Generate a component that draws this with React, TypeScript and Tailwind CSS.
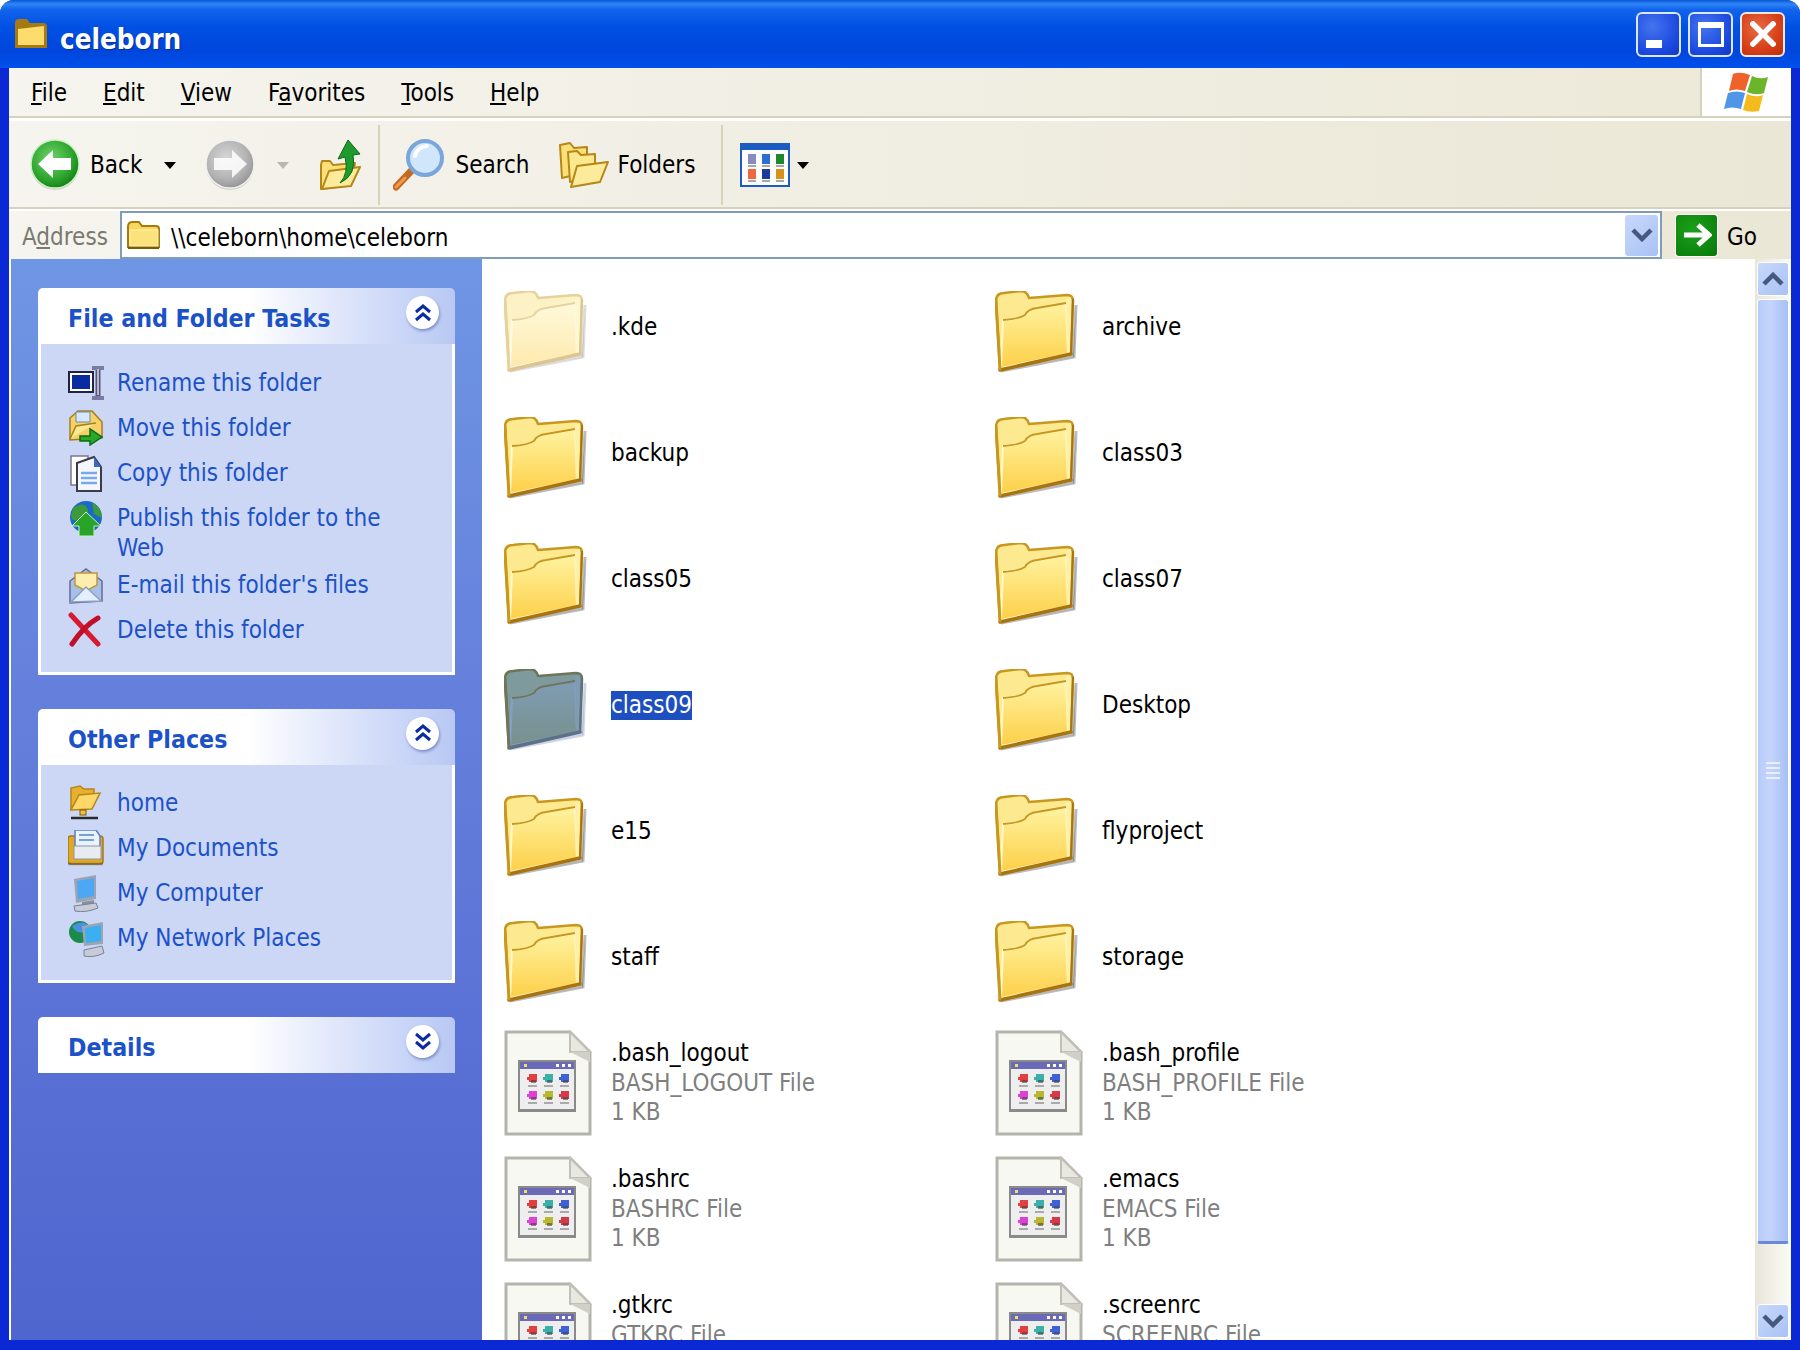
import React from 'react';

const menus: [string, string, string][] = [
  ['', 'F', 'ile'],
  ['', 'E', 'dit'],
  ['', 'V', 'iew'],
  ['F', 'a', 'vorites'],
  ['', 'T', 'ools'],
  ['', 'H', 'elp'],
];

const F_COLORS = {
  normal: { edge: '#c8971e', back: '#fde98f', top: '#fff3a0', bottom: '#fdcf48', dark: '#a87410', rim: '#fff8c8', strip: '#fff0a8', shadow: '#00000044' },
  faded: { edge: '#e6d29c', back: '#fdf2c6', top: '#fff9db', bottom: '#fde9ac', dark: '#dcc58e', rim: '#fffbe6', strip: '#fff7d4', shadow: '#00000022' },
  selected: { edge: '#6f7558', back: '#7f9a9c', top: '#7f9cb4', bottom: '#79908c', dark: '#5c7086', rim: '#86a0c8', strip: '#7f9cb4', shadow: '#4a64a044' },
};

const Folder = ({ kind = 'normal' }: { kind?: 'normal' | 'faded' | 'selected' }) => {
  const c = F_COLORS[kind];
  const id = `fold-${kind}`;
  return (
    <svg width="84" height="82" viewBox="0 0 84 82" className="mt-[14px] shrink-0">
      <defs>
        <linearGradient id={id} x1="0" y1="0" x2="0" y2="1">
          <stop offset="0" stopColor={c.top} />
          <stop offset="1" stopColor={c.bottom} />
        </linearGradient>
      </defs>
      <path d="M6 80 L79 66 L81 14 L78 66 Z" fill={c.shadow} stroke={c.shadow} strokeWidth="3" />
      <path d="M1 10 Q1 2 9 2 L26 0 Q32 0 34 7 L72 4 Q78 4 78 10 L76 62 L5 78 Z" fill={c.back} stroke={c.edge} strokeWidth="2.5" strokeLinejoin="round" />
      <path d="M8 29 Q24 28 30 24 Q33 18 42 17 L71 12 L73 63 L6 77 Z" fill={`url(#${id})`} stroke={c.rim} strokeWidth="2" />
      <path d="M71 8 L76 6 L75 62 L72 63 Z" fill={c.strip} />
      <path d="M5 79 L76 63" stroke={c.dark} strokeWidth="3.5" strokeLinecap="round" />
      <path d="M1 10 L5 78" stroke={c.edge} strokeWidth="3" strokeLinecap="round" />
      <path d="M8 29 Q24 28 30 24 Q33 18 42 17 L71 12" fill="none" stroke={c.edge} strokeWidth="1.8" />
      <path d="M78 8 L76 62" stroke={c.dark} strokeWidth="2" />
    </svg>
  );
};

const FileDoc = () => {
  const cells = ['#e24040', '#3cb0a8', '#4060d8', '#e040d8', '#b8b830', '#d83848'];
  return (
    <svg width="88" height="106" viewBox="0 0 88 106" className="mt-[4px] shrink-0">
      <path d="M2 2 L66 2 L86 22 L86 104 L2 104 Z" fill="#f8f8f2" stroke="#b4b4ac" strokeWidth="3" />
      <path d="M66 2 L66 22 L86 22 Z" fill="#e8e8e0" stroke="#c0c0b8" strokeWidth="2" />
      <path d="M66 22 L86 22 L86 32 Z" fill="#d0d0c8" />
      <rect x="14" y="30" width="58" height="52" fill="#8a8a88" />
      <rect x="16" y="32" width="54" height="47" fill="#eeeeee" />
      <rect x="16" y="32" width="54" height="7" fill="#6a6ab8" />
      <rect x="20" y="34" width="3" height="3" fill="#f0e060" />
      <rect x="52" y="34" width="3" height="3" fill="#ffffff" />
      <rect x="58" y="34" width="3" height="3" fill="#ffffff" />
      <rect x="64" y="34" width="3" height="3" fill="#ffffff" />
      {cells.map((col, i) => {
        const x = 24 + (i % 3) * 16;
        const y = 44 + Math.floor(i / 3) * 17;
        return (
          <g key={i}>
            <rect x={x + 1} y={y} width="8" height="8" fill={col} />
            <rect x={x - 1} y={y + 3} width="3" height="3" fill={col} />
            <rect x={x + 3} y={y + 6} width="5" height="3" fill="#444" opacity="0.6" />
            <rect x={x} y={y + 11} width="9" height="2" fill="#aaaaaa" />
          </g>
        );
      })}
    </svg>
  );
};

const SmallFolder = () => (
  <svg width="36" height="30" viewBox="0 0 36 30" className="shrink-0">
    <path d="M2 7 Q2 2 6 2 L13 2 L16 6 L30 6 Q33 6 33 9 L33 27 L2 27 Z" fill="#f8d860" stroke="#a67a10" strokeWidth="2" />
    <rect x="4" y="10" width="28" height="16" fill="#fbe27a" stroke="#fff3b0" strokeWidth="1" />
    <path d="M2 28 L33 28" stroke="#7c5a08" strokeWidth="2" />
  </svg>
);

const RoundArrow = ({ dir, gray }: { dir: 'left' | 'right'; gray?: boolean }) => {
  const id = gray ? 'round-gray' : 'round-green';
  return (
    <svg width="52" height="52" viewBox="0 0 52 52" className="shrink-0">
      <defs>
        <radialGradient id={id} cx="0.42" cy="0.38" r="0.7">
          <stop offset="0" stopColor={gray ? '#d6d6d6' : '#6fd36a'} />
          <stop offset="0.6" stopColor={gray ? '#b4b4b4' : '#32a832'} />
          <stop offset="1" stopColor={gray ? '#8c8c8c' : '#0c780c'} />
        </radialGradient>
      </defs>
      <circle cx="26" cy="27" r="24" fill="#00000022" />
      <circle cx="26" cy="25" r="24" fill={`url(#${id})`} stroke={gray ? '#f0f0f0' : '#c8f0c0'} strokeWidth="1.5" />
      <path
        d={dir === 'left' ? 'M9 25 L24 11 L24 19 L42 19 L42 31 L24 31 L24 39 Z' : 'M43 25 L28 11 L28 19 L10 19 L10 31 L28 31 L28 39 Z'}
        fill="#ffffff"
        opacity={gray ? 0.85 : 1}
      />
    </svg>
  );
};

const Caret = ({ color = '#000000' }: { color?: string }) => (
  <svg width="12" height="7" viewBox="0 0 12 7" className="shrink-0">
    <path d="M0 0 L12 0 L6 7 Z" fill={color} />
  </svg>
);

const UpIcon = () => (
  <svg width="42" height="52" viewBox="0 0 42 52" className="shrink-0">
    <path d="M2 26 L2 50 L32 46 L36 24 L14 26 L11 22 L3 22 Z" fill="#fbdf78" stroke="#b48716" strokeWidth="2" strokeLinejoin="round" />
    <path d="M3 50 L10 32 L41 28 L32 47 Z" fill="#fdeb9c" stroke="#b48716" strokeWidth="2" strokeLinejoin="round" />
    <path d="M21 44 Q30 34 26 18 L19 20 L29 1 L41 15 L34 16 Q38 36 21 44 Z" fill="#1f9a2c" stroke="#0c6a18" strokeWidth="1" />
  </svg>
);

const SearchIcon = () => (
  <svg width="54" height="54" viewBox="0 0 54 54" className="shrink-0">
    <path d="M3 49 L20 31" stroke="#c46a24" strokeWidth="7" strokeLinecap="round" />
    <path d="M3 49 L12 40" stroke="#f09a50" strokeWidth="3" strokeLinecap="round" />
    <circle cx="32" cy="20" r="17" fill="#cfe6fb" stroke="#7aa6dc" strokeWidth="4" />
    <path d="M22 18 Q24 9 34 8" fill="none" stroke="#ffffff" strokeWidth="4" strokeLinecap="round" />
  </svg>
);

const FoldersIcon = () => (
  <svg width="50" height="46" viewBox="0 0 50 46" className="shrink-0">
    <path d="M1 3 L11 1 L15 6 L28 5 L28 30 L3 36 Z" fill="#fbdf78" stroke="#b48716" strokeWidth="2" strokeLinejoin="round" />
    <path d="M9 10 L18 9 L22 13 L36 12 L36 34 L11 40 Z" fill="#fde88e" stroke="#b48716" strokeWidth="2" strokeLinejoin="round" />
    <path d="M12 45 L18 24 L49 20 L41 40 Z" fill="#fdeb9c" stroke="#b48716" strokeWidth="2" strokeLinejoin="round" />
  </svg>
);

const ViewsIcon = () => {
  const cells = ['#8a8abf', '#2a70d0', '#1c8a2c', '#f06840', '#1c3a98', '#d8921c'];
  return (
    <svg width="50" height="44" viewBox="0 0 50 44" className="shrink-0">
      <rect x="1" y="1" width="48" height="42" fill="#ffffff" stroke="#1a5cc0" strokeWidth="2" />
      <rect x="1" y="1" width="48" height="6" fill="#1a5cc0" />
      {cells.map((col, i) => {
        const x = 8 + (i % 3) * 14;
        const y = 11 + Math.floor(i / 3) * 15;
        return (
          <g key={i}>
            <rect x={x} y={y} width="8" height="10" fill={col} />
            <rect x={x} y={y + 11} width="8" height="2" fill="#a8a8a8" />
          </g>
        );
      })}
    </svg>
  );
};

const Flag = () => (
  <svg width="46" height="42" viewBox="0 0 46 42" className="shrink-0">
    <path d="M9 3 Q16 0 26 4 L21 20 Q12 17 5 20 Z" fill="#f0622a" />
    <path d="M28 5 Q36 9 44 6 L40 22 Q32 25 23 21 Z" fill="#6bb52a" />
    <path d="M4 22 Q12 19 21 22 L17 38 Q8 35 0 38 Z" fill="#4f96e8" />
    <path d="M23 23 Q32 27 39 24 L35 40 Q26 42 19 39 Z" fill="#f5bb1c" />
  </svg>
);

const CaptionButton = ({ kind }: { kind: 'min' | 'max' | 'close' }) => (
  <div
    className={
      kind === 'close'
        ? 'flex h-[45px] w-[45px] items-center justify-center rounded-[6px] border-2 border-[#f0e8e4] bg-[radial-gradient(circle_at_40%_35%,#e86a44,#d43c14_65%,#b8300c)]'
        : 'flex h-[45px] w-[45px] items-center justify-center rounded-[6px] border-2 border-[#dce6fa] bg-[radial-gradient(circle_at_35%_30%,#4474ee,#1c4ae0_65%,#1238c0)]'
    }
  >
    {kind === 'min' && <div className="mt-[19px] mr-[10px] h-[8px] w-[16px] bg-white" />}
    {kind === 'max' && <div className="h-[25px] w-[26px] border-[3px] border-t-[6px] border-white" />}
    {kind === 'close' && (
      <svg width="26" height="26" viewBox="0 0 26 26">
        <path d="M3 3 L23 23 M23 3 L3 23" stroke="#ffffff" strokeWidth="5.5" strokeLinecap="square" />
      </svg>
    )}
  </div>
);

const Chevron = ({ up, color = '#47597e', double }: { up?: boolean; color?: string; double?: boolean }) =>
  double ? (
    <svg width="18" height="18" viewBox="0 0 18 18" className="shrink-0">
      <path d={up ? 'M2 8 L9 2 L16 8 M2 16 L9 10 L16 16' : 'M2 2 L9 8 L16 2 M2 10 L9 16 L16 10'} fill="none" stroke={color} strokeWidth="3" />
    </svg>
  ) : (
    <svg width="22" height="14" viewBox="0 0 22 14" className="shrink-0">
      <path d={up ? 'M2 12 L11 3 L20 12' : 'M2 2 L11 11 L20 2'} fill="none" stroke={color} strokeWidth="4.5" />
    </svg>
  );

const IconRename = () => (
  <svg width="38" height="36" viewBox="0 0 38 36">
    <rect x="1" y="7" width="24" height="20" fill="#ffffff" stroke="#222244" strokeWidth="2" />
    <rect x="4" y="10" width="18" height="14" fill="#0a2ca0" />
    <path d="M30 2 L30 32" stroke="#55557a" strokeWidth="5" />
    <path d="M24 3 L36 3 M24 33 L36 33" stroke="#7a7aa4" strokeWidth="4" />
    <path d="M30 4 L30 30" stroke="#d8d8e8" strokeWidth="1.5" />
  </svg>
);

const IconMove = () => (
  <svg width="38" height="36" viewBox="0 0 38 36">
    <path d="M2 30 L2 8 L10 1 L24 1 L34 12 L34 28 Z" fill="#f4d267" stroke="#a6801c" strokeWidth="1.5" />
    <path d="M8 2 L22 2 L22 12 L8 12 Z" fill="#d8e8fc" stroke="#6a88b8" strokeWidth="1" />
    <path d="M2 29 L8 16 L28 13" fill="#fbe890" stroke="#a6801c" strokeWidth="1.5" />
    <path d="M12 26 L22 26 L22 19 L34 27 L22 35 L22 31 L12 31 Z" fill="#2aa82a" stroke="#0c6a14" strokeWidth="1.5" />
  </svg>
);

const IconCopy = () => (
  <svg width="38" height="38" viewBox="0 0 38 38">
    <path d="M3 1 L20 1 L20 30 L3 30 Z" fill="#ffffff" stroke="#7a7a8a" strokeWidth="1.5" />
    <path d="M9 8 L26 2 L33 12 L33 36 L9 36 Z" fill="#f4f8fe" stroke="#3a3a4a" strokeWidth="2" />
    <path d="M26 2 L26 12 L33 12 Z" fill="#3a6ac8" />
    <path d="M13 18 L29 18 M13 23 L29 23 M13 28 L29 28" stroke="#7aa8e8" strokeWidth="2.5" />
  </svg>
);

const IconPublish = () => (
  <svg width="38" height="38" viewBox="0 0 38 38">
    <circle cx="18" cy="17" r="16" fill="#1c68c8" />
    <path d="M5 8 Q14 2 18 6 Q24 14 12 20 Q4 22 3 16 Z M24 2 Q34 8 34 18 L26 14 Z" fill="#3a9a3c" />
    <path d="M18 12 L33 26 L26 26 L26 36 L11 36 L11 26 L4 26 Z" fill="#28a428" stroke="#c8f0c0" strokeWidth="1" />
  </svg>
);

const IconMail = () => (
  <svg width="38" height="38" viewBox="0 0 38 38">
    <path d="M2 14 L18 2 L34 14 L34 34 L2 36 Z" fill="#a8c0e8" stroke="#6a6a90" strokeWidth="1.5" />
    <path d="M7 6 L29 6 L29 18 L18 24 L7 18 Z" fill="#fdeeb0" stroke="#c09838" strokeWidth="1.5" />
    <path d="M3 35 L18 20 L33 34 L3 35 Z" fill="#e4effc" stroke="#8aa0c8" strokeWidth="1.5" />
  </svg>
);

const IconDelete = () => (
  <svg width="38" height="36" viewBox="0 0 38 36">
    <path d="M3 3 L30 32" stroke="#d81830" strokeWidth="5" strokeLinecap="round" />
    <path d="M30 6 Q16 14 4 32" stroke="#c01028" strokeWidth="5" strokeLinecap="round" fill="none" />
  </svg>
);

const IconHome = () => (
  <svg width="38" height="36" viewBox="0 0 38 36">
    <path d="M3 24 L3 3 L12 1 L16 4 L26 4 L26 10 L12 12 Z" fill="#e8b030" stroke="#b48716" strokeWidth="1.5" />
    <path d="M3 25 L11 10 L32 8 L24 24 Z" fill="#fdd868" stroke="#b48716" strokeWidth="1.5" />
    <rect x="12" y="25" width="6" height="5" fill="#f0c040" stroke="#7a5a08" strokeWidth="1" />
    <path d="M3 33 L30 33" stroke="#2a2a2a" strokeWidth="2.5" />
  </svg>
);

const IconDocs = () => (
  <svg width="38" height="36" viewBox="0 0 38 36">
    <rect x="0" y="6" width="35" height="28" rx="3" fill="#e0a824" stroke="#a87c14" strokeWidth="1.5" />
    <path d="M7 0 L28 0 L32 6 L32 18 L7 18 Z" fill="#eaf2fd" stroke="#5a80c0" strokeWidth="1.5" />
    <path d="M11 5 L26 5 M11 10 L26 10" stroke="#7aa0d8" strokeWidth="2" />
    <rect x="6" y="16" width="27" height="13" fill="#e8ecf2" stroke="#8a96a8" strokeWidth="1" />
    <path d="M0 34 L35 34" stroke="#44444466" strokeWidth="2.5" />
  </svg>
);

const IconComputer = () => (
  <svg width="38" height="38" viewBox="0 0 38 38">
    <path d="M6 4 L28 0 L28 24 L8 28 Z" fill="#9ca4b4" />
    <path d="M9 6 L26 3 L26 21 L10 24 Z" fill="#4ca8f4" />
    <path d="M14 27 L26 25 L26 29 L14 31 Z" fill="#8a90a4" />
    <path d="M6 31 L28 28 L30 33 Q18 38 7 36 Z" fill="#c8ccd8" stroke="#7a8094" strokeWidth="1" />
  </svg>
);

const IconNetwork = () => (
  <svg width="38" height="38" viewBox="0 0 38 38">
    <circle cx="12" cy="12" r="11" fill="#1c8a48" />
    <path d="M4 6 Q12 0 20 4 L16 12 Q8 14 4 6 Z" fill="#4a90e0" />
    <path d="M14 6 L35 2 L35 24 L16 26 Z" fill="#9ca4b4" />
    <path d="M17 8 L33 5 L33 21 L18 23 Z" fill="#3ab0f0" />
    <path d="M16 30 L34 26 L36 33 Q26 38 16 36 Z" fill="#c8ccd8" stroke="#7a8094" strokeWidth="1" />
  </svg>
);

type Task = { icon: React.ReactNode; lines: string; wraps?: boolean };

const tasks: Task[] = [
  { icon: <IconRename />, lines: 'Rename this folder' },
  { icon: <IconMove />, lines: 'Move this folder' },
  { icon: <IconCopy />, lines: 'Copy this folder' },
  { icon: <IconPublish />, lines: 'Publish this folder to the Web', wraps: true },
  { icon: <IconMail />, lines: "E-mail this folder's files" },
  { icon: <IconDelete />, lines: 'Delete this folder' },
];

const places: Task[] = [
  { icon: <IconHome />, lines: 'home' },
  { icon: <IconDocs />, lines: 'My Documents' },
  { icon: <IconComputer />, lines: 'My Computer' },
  { icon: <IconNetwork />, lines: 'My Network Places' },
];

const PanelHeader = ({ title, open }: { title: string; open: boolean }) => (
  <div className="flex h-[56px] w-[417px] items-center justify-between rounded-t-[5px] bg-[linear-gradient(90deg,#ffffff_0%,#ffffff_50%,#c6d3f7_90%,#b8c8f2_100%)] pr-[16px] pl-[30px]">
    <span className="mt-[7px] text-[24.7px] font-bold leading-none text-[#1c52c8]">{title}</span>
    <div className="mb-[7px] flex h-[33px] w-[33px] items-center justify-center rounded-full bg-white shadow-[1px_2px_3px_#7f8fc8]">
      <Chevron up={open} double color="#0a2ca0" />
    </div>
  </div>
);

const Panel = ({ title, items }: { title: string; items: Task[] }) => (
  <div className="flex w-[417px] flex-col">
    <PanelHeader title={title} open />
    <div className="border-[3px] border-t-0 border-white bg-[#cbd7f5] pt-[16px] pr-[20px] pb-[19px] pl-[27px]">
      {items.map((it) => (
        <div key={it.lines} className={it.wraps ? 'flex items-start gap-[11px] pt-[7.5px] leading-[30px] text-[#1c52c8]' : 'flex items-start gap-[11px] py-[7.5px] leading-[30px] text-[#1c52c8]'}>
          <div className="-mt-[3px] h-[30px] w-[38px] shrink-0">{it.icon}</div>
          <span className="flex-1">{it.lines}</span>
        </div>
      ))}
    </div>
  </div>
);

const folders = ['.kde', 'archive', 'backup', 'class03', 'class05', 'class07', 'class09', 'Desktop', 'e15', 'flyproject', 'staff', 'storage'];

const files: [string, string][] = [
  ['.bash_logout', 'BASH_LOGOUT File'],
  ['.bash_profile', 'BASH_PROFILE File'],
  ['.bashrc', 'BASHRC File'],
  ['.emacs', 'EMACS File'],
  ['.gtkrc', 'GTKRC File'],
  ['.screenrc', 'SCREENRC File'],
];

export default function App() {
  return (
    <div className="flex h-[1350px] w-[1800px] flex-col overflow-hidden rounded-t-[14px] bg-[#0a28d4] font-['DejaVu_Sans_Condensed','DejaVu_Sans',sans-serif] text-[24px] text-black">
      {/* title bar */}
      <div className="flex h-[68px] shrink-0 items-center bg-[linear-gradient(180deg,#0a58d8_0%,#2f86f6_6%,#1264ec_14%,#0050e4_40%,#0046dc_75%,#0050ec_100%)] pr-[15px] pl-[14px]">
        <svg width="34" height="32" viewBox="0 0 34 32" className="shrink-0">
          <path d="M1 5 Q1 1 5 1 L13 1 L16 5 L29 5 Q33 5 33 9 L33 30 L1 30 Z" fill="#a67a10" />
          <path d="M4 11 L30 8 L30 27 L4 27 Z" fill="#fbdc6c" />
        </svg>
        <span className="mt-[11px] ml-[12px] flex-1 text-[27.5px] font-bold text-white [text-shadow:1px_1px_1px_#0a2ca0]">celeborn</span>
        <div className="flex gap-[7px]">
          <CaptionButton kind="min" />
          <CaptionButton kind="max" />
          <CaptionButton kind="close" />
        </div>
      </div>

      <div className="mr-[9px] mb-[10px] ml-[9px] flex min-h-0 flex-1 flex-col bg-white">
        {/* menu bar */}
        <div className="flex h-[50px] shrink-0 border-b-2 border-[#d8d2bd] bg-[linear-gradient(90deg,#f5f4ee_0%,#ece9d8_100%)]">
          <div className="flex flex-1 items-center gap-[36px] pt-[2px] pl-[22px]">
            {menus.map(([a, u, b]) => (
              <span key={u + b}>
                {a}
                <u>{u}</u>
                {b}
              </span>
            ))}
          </div>
          <div className="flex w-[91px] items-center justify-center border-l-2 border-[#d8d2bd] bg-white">
            <Flag />
          </div>
        </div>

        {/* toolbar */}
        <div className="mt-[3px] flex h-[88px] shrink-0 items-center border-b-2 border-[#d8d2bd] bg-[linear-gradient(90deg,#f5f4ee_0%,#ebe7d6_100%)] pt-[2px] pl-[20px]">
          <RoundArrow dir="left" />
          <span className="ml-[9px]">Back</span>
          <div className="ml-[22px]">
            <Caret />
          </div>
          <div className="ml-[28px]">
            <RoundArrow dir="right" gray />
          </div>
          <div className="ml-[21px]">
            <Caret color="#b8b8b0" />
          </div>
          <div className="ml-[30px]">
            <UpIcon />
          </div>
          <div className="ml-[17px] h-[80px] w-[2px] bg-[#d8d2bd]" />
          <div className="ml-[13px]">
            <SearchIcon />
          </div>
          <span className="ml-[8px]">Search</span>
          <div className="ml-[29px]">
            <FoldersIcon />
          </div>
          <span className="ml-[9px]">Folders</span>
          <div className="ml-[26px] h-[80px] w-[2px] bg-[#d8d2bd]" />
          <div className="ml-[17px]">
            <ViewsIcon />
          </div>
          <div className="ml-[7px]">
            <Caret />
          </div>
        </div>

        {/* address bar */}
        <div className="mt-[2px] flex h-[48px] shrink-0 items-center bg-[linear-gradient(90deg,#f5f4ee_0%,#ebe7d6_100%)]">
          <span className="mt-[3px] ml-[13px] w-[98px] text-[#7a7a70]">
            A<u>d</u>dress
          </span>
          <div className="flex h-[48px] w-[1542px] items-center border-2 border-[#7f9db9] bg-white pl-[4px]">
            <SmallFolder />
            <span className="mt-[5px] ml-[9px] flex-1">\\celeborn\home\celeborn</span>
            <div className="mr-[2px] flex h-[41px] w-[33px] items-center justify-center rounded-[3px] bg-[linear-gradient(135deg,#c8d8fc,#a8c2f4)]">
              <Chevron />
            </div>
          </div>
          <div className="ml-[14px] flex h-[41px] w-[41px] items-center justify-center rounded-[3px] bg-[radial-gradient(circle_at_40%_35%,#1aa01a,#0a780a)] shadow-[0_0_0_1px_#ffffff]">
            <svg width="30" height="26" viewBox="0 0 30 26">
              <path d="M2 13 L26 13 M16 3 L27 13 L16 23" fill="none" stroke="#ffffff" strokeWidth="5" />
            </svg>
          </div>
          <span className="mt-[3px] ml-[10px]">Go</span>
        </div>

        {/* main */}
        <div className="flex min-h-0 flex-1 bg-white">
          <div className="ml-[2px] flex w-[471px] shrink-0 flex-col gap-[34px] bg-[linear-gradient(180deg,#6f96e4_0%,#6580dc_40%,#4f65cf_100%)] pt-[29px] pl-[27px]">
            <Panel title="File and Folder Tasks" items={tasks} />
            <Panel title="Other Places" items={places} />
            <PanelHeader title="Details" open={false} />
          </div>

          <div className="min-w-0 flex-1 overflow-hidden pt-[3px] pl-[22px]">
            <div className="grid grid-cols-[491px_491px] auto-rows-[126px]">
              {folders.map((name) => (
                <div key={name} className="flex items-center">
                  <Folder kind={name === '.kde' ? 'faded' : name === 'class09' ? 'selected' : 'normal'} />
                  <span className={name === 'class09' ? 'mt-[4px] ml-[23px] bg-[#1e4fc0] leading-[29px] text-white' : 'mt-[4px] ml-[23px]'}>{name}</span>
                </div>
              ))}
              {files.map(([name, type]) => (
                <div key={name} className="flex items-center">
                  <FileDoc />
                  <div className="mt-[5px] ml-[19px] flex flex-col leading-[29.5px]">
                    <span>{name}</span>
                    <span className="text-[#7f7f7f]">{type}</span>
                    <span className="text-[#7f7f7f]">1 KB</span>
                  </div>
                </div>
              ))}
            </div>
          </div>

          {/* scrollbar */}
          <div className="flex w-[36px] shrink-0 flex-col bg-[linear-gradient(90deg,#e8e6da,#fbfbf6)] px-[2px] pt-[3px] pb-[2px]">
            <div className="flex h-[34px] shrink-0 items-center justify-center rounded-[3px] border border-white bg-[linear-gradient(135deg,#c8d8fc,#a8c2f4)]">
              <Chevron up />
            </div>
            <div className="mt-[3px] flex h-[945px] shrink-0 flex-col items-center justify-center gap-[3px] rounded-[3px] border border-white border-b-[3px] border-b-[#6a8ad8] bg-[linear-gradient(90deg,#b8ccfa,#c4d4fc_40%,#a8c0f4)]">
              <div className="h-[2px] w-[14px] bg-[#e8f0ff]" />
              <div className="h-[2px] w-[14px] bg-[#e8f0ff]" />
              <div className="h-[2px] w-[14px] bg-[#e8f0ff]" />
              <div className="h-[2px] w-[14px] bg-[#e8f0ff]" />
            </div>
            <div className="flex-1" />
            <div className="flex h-[34px] shrink-0 items-center justify-center rounded-[3px] border border-white bg-[linear-gradient(135deg,#c8d8fc,#a8c2f4)]">
              <Chevron />
            </div>
          </div>
        </div>
      </div>
    </div>
  );
}
